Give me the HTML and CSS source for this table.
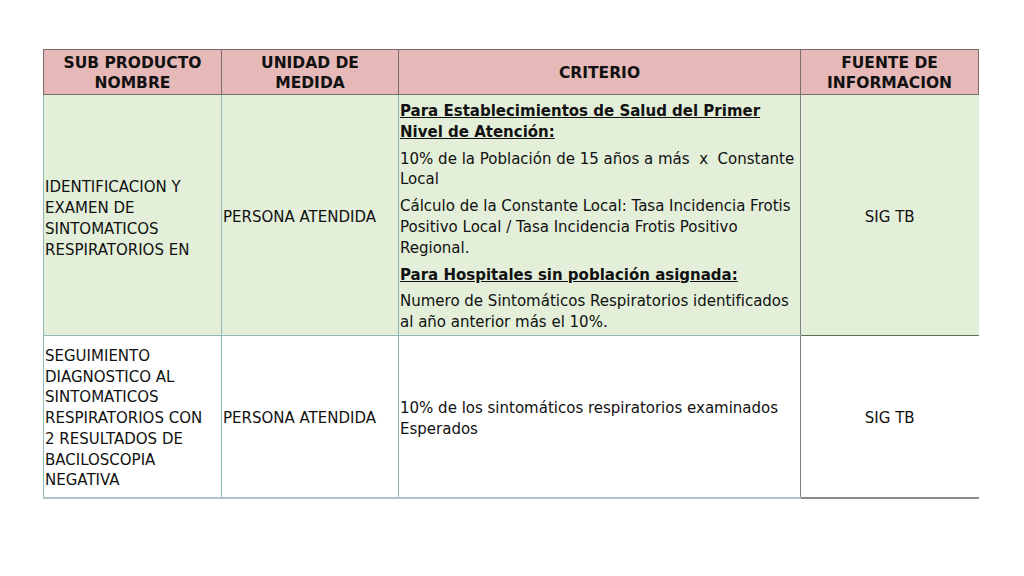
FILE: index.html
```html
<!DOCTYPE html>
<html lang="es">
<head>
<meta charset="utf-8">
<title>Sintomáticos Respiratorios</title>
<link rel="stylesheet" href="styles.css">
</head>
<body>
<table class="grid">
  <colgroup>
    <col class="c1"><col class="c2"><col class="c3"><col class="c4">
  </colgroup>
  <thead>
    <tr class="head">
      <th>SUB PRODUCTO<br>NOMBRE</th>
      <th>UNIDAD DE<br>MEDIDA</th>
      <th>CRITERIO</th>
      <th class="last">FUENTE DE<br>INFORMACION</th>
    </tr>
  </thead>
  <tbody>
    <tr class="green r1">
      <td class="left lower">IDENTIFICACION Y<br>EXAMEN DE<br>SINTOMATICOS<br>RESPIRATORIOS EN</td>
      <td class="left">PERSONA ATENDIDA</td>
      <td class="crit">
        <p class="u">Para Establecimientos de Salud del Primer<br>Nivel de Atención:</p>
        <p>10% de la Población de 15 años a más&nbsp; x&nbsp; Constante<br>Local</p>
        <p>Cálculo de la Constante Local: Tasa Incidencia Frotis<br>Positivo Local / Tasa Incidencia Frotis Positivo<br>Regional.</p>
        <p class="u">Para Hospitales sin población asignada:</p>
        <p>Numero de Sintomáticos Respiratorios identificados<br>al año anterior más el 10%.</p>
      </td>
      <td class="center last">SIG TB</td>
    </tr>
    <tr class="white r2">
      <td class="left">SEGUIMIENTO<br>DIAGNOSTICO AL<br>SINTOMATICOS<br>RESPIRATORIOS CON<br>2 RESULTADOS DE<br>BACILOSCOPIA<br>NEGATIVA</td>
      <td class="left">PERSONA ATENDIDA</td>
      <td class="crit"><p>10% de los sintomáticos respiratorios examinados<br>Esperados</p></td>
      <td class="center last">SIG TB</td>
    </tr>
  </tbody>
</table>
</body>
</html>
```
FILE: styles.css
```css
html, body {
  margin: 0;
  padding: 0;
  background: #ffffff;
}
body {
  font-family: "DejaVu Sans", "Liberation Sans", sans-serif;
  color: #111111;
}
.grid {
  margin: 49px 0 0 43px;
  border-collapse: collapse;
  table-layout: fixed;
  width: 935px;
}
.c1 { width: 178px; }
.c2 { width: 177px; }
.c3 { width: 402px; }
.c4 { width: 178px; }

.head th {
  background: #e6b8b7;
  height: 42px;
  font-size: 15.5px;
  line-height: 20.5px;
  font-weight: bold;
  text-align: center;
  vertical-align: middle;
  border: 1px solid #7a6c6c;
  padding: 2px 1px 0;
  white-space: nowrap;
}
td {
  font-size: 15px;
  line-height: 20.8px;
  vertical-align: middle;
  padding: 4px 1px 0;
  border: 1px solid #8fb9b9;
  white-space: nowrap;
}
.green td { background: #e3efd9; }
.white td { background: #ffffff; }
.r1 td { height: 236px; }
.r2 td { height: 157px; }
.r1 td.lower { padding-top: 8px; height: 232px; }
.left { text-align: left; }
.center { text-align: center; }
td.crit { border-right: 1px solid #808080; }
td.last { border-right: none; }
.r1 td.last { border-bottom: 1px solid #5f6f5a; }
.r2 td.last { border-bottom: 2px solid #8c8c8c; }
.r2 td { border-bottom: 2px solid #a9c3c9; }
.crit p {
  margin: 0 0 6px 0;
}
.crit p:last-child { margin-bottom: 0; }
.crit p.u {
  font-weight: bold;
  text-decoration: underline;
}
```
